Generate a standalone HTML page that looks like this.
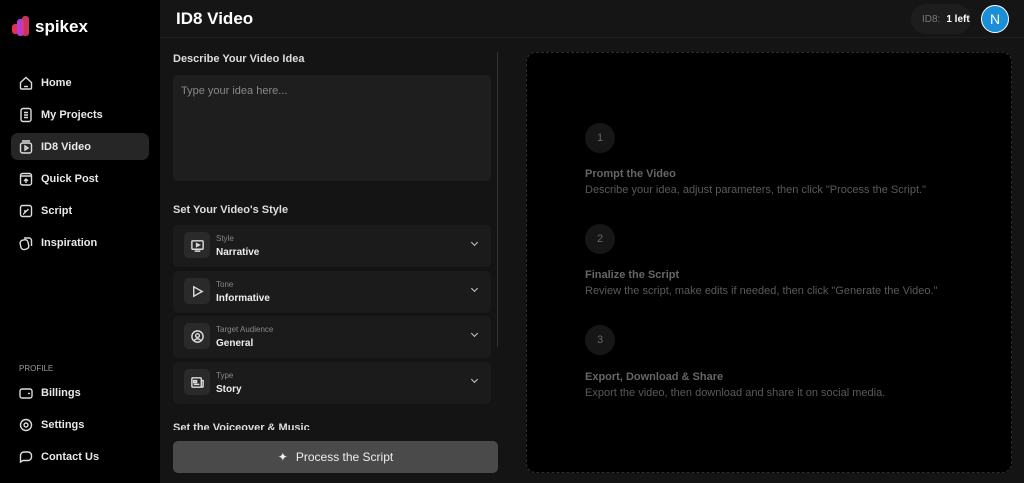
<!DOCTYPE html>
<html><head><meta charset="utf-8"><style>
*{box-sizing:border-box;margin:0;padding:0}
body{width:1024px;height:483px;overflow:hidden;background:#141414;font-family:"Liberation Sans",sans-serif;color:#fff;position:relative}
.sb{position:absolute;left:0;top:0;width:160px;height:483px;background:#000}
.logo{position:absolute;left:12px;top:16px;display:flex;align-items:center;gap:3px;font-weight:bold;font-size:17px}
.nav{position:absolute;left:11px;width:138px;height:27px;border-radius:7px;display:flex;align-items:center;padding-left:7px;font-size:11px;font-weight:bold;color:#e8e8e8}
.nav svg{width:16px;height:16px;margin-right:7px;fill:none;stroke:#ddd;stroke-width:1.4}
.nav.act{background:#262626}
.hdr{position:absolute;left:160px;top:0;right:0;height:38px;background:#151515;border-bottom:1px solid #1e1e1e}
.ttl{position:absolute;left:176px;top:9px;font-size:17px;font-weight:bold}
.lbl{position:absolute;left:173px;font-size:11px;font-weight:bold;color:#ddd}
.ta{position:absolute;left:173px;top:75px;width:318px;height:106px;background:#1e1e1e;border-radius:5px;padding:10px 8px;font-size:11px;color:#888}
.sel{position:absolute;left:173px;width:318px;height:42px;background:#1b1b1b;border-radius:5px}
.ic{position:absolute;left:11px;top:7px;width:26px;height:26px;background:#2a2a2a;border-radius:5px;display:flex;align-items:center;justify-content:center}
.ic svg{width:15px;height:15px;fill:none;stroke:#ddd;stroke-width:1.5}
.sl{position:absolute;left:43px;top:9px;font-size:8px;color:#888}
.sv{position:absolute;left:43px;top:22px;font-size:10px;font-weight:bold;color:#eee}
.chev{position:absolute;right:14px;top:15px;width:5px;height:5px;border-right:1.5px solid #ccc;border-bottom:1.5px solid #ccc;transform:rotate(45deg)}
.btn{position:absolute;left:173px;top:441px;width:325px;height:32px;background:#4a4a4a;border-radius:5px;display:flex;align-items:center;justify-content:center;font-size:12px;color:#eee}
.rp{position:absolute;left:526px;top:52px;width:486px;height:421px;background:#000;border:1.5px dashed #2c2c2c;border-radius:10px}
.num{position:absolute;left:585px;width:30px;height:30px;border-radius:50%;background:#161616;color:#666;font-size:11px;display:flex;align-items:center;justify-content:center}
.st{position:absolute;left:585px;font-size:11px;font-weight:bold;color:#666}
.sd{position:absolute;left:585px;font-size:11px;color:#5a5a5a}
</style></head><body>
<div class="sb">
<div class="logo"><svg width="20" height="22" viewBox="0 0 20 22"><rect x="0" y="8" width="7" height="10" rx="3" fill="#e8304a"/><rect x="5" y="3" width="7" height="17" rx="3" fill="#b53bd6"/><rect x="10" y="0" width="7" height="20" rx="3" fill="#e23a6a" opacity=".9"/></svg>spikex</div>
<div class="nav" style="top:69px"><svg viewBox="0 0 16 16"><path d="M2.5 7.5L8 2.5l5.5 5V13a1 1 0 01-1 1h-9a1 1 0 01-1-1z"/><path d="M6 11.5h4"/></svg>Home</div>
<div class="nav" style="top:101px"><svg viewBox="0 0 16 16"><rect x="3" y="1.5" width="10" height="13" rx="2"/><path d="M6 5.5h4M6 8h4M6 10.5h4"/></svg>My Projects</div>
<div class="nav act" style="top:133px"><svg viewBox="0 0 16 16"><rect x="2.5" y="4" width="11" height="10" rx="2"/><path d="M4 2h8M7 7l3 2-3 2z"/></svg>ID8 Video</div>
<div class="nav" style="top:165px"><svg viewBox="0 0 16 16"><rect x="2.5" y="2.5" width="11" height="11.5" rx="2"/><path d="M2.5 5h11M8 12V8M6 10l2-2 2 2"/></svg>Quick Post</div>
<div class="nav" style="top:197px"><svg viewBox="0 0 16 16"><rect x="2.5" y="2.5" width="11" height="11" rx="2"/><path d="M6 10.5l4.5-4.5M5 11l1 0M6 8h2"/></svg>Script</div>
<div class="nav" style="top:229px"><svg viewBox="0 0 16 16"><rect x="2.5" y="5" width="8" height="9.5" rx="3" transform="rotate(-12 6 10)"/><path d="M6 3h5a2.5 2.5 0 012.5 2.5V11"/></svg>Inspiration</div>
<div style="position:absolute;left:19px;top:364px;font-size:8px;color:#999">PROFILE</div>
<div class="nav" style="top:379px"><svg viewBox="0 0 16 16"><rect x="2" y="4" width="12" height="9" rx="2"/><path d="M10 8.5h2"/></svg>Billings</div>
<div class="nav" style="top:411px"><svg viewBox="0 0 16 16"><circle cx="8" cy="8" r="2"/><circle cx="8" cy="8" r="5.5"/></svg>Settings</div>
<div class="nav" style="top:443px"><svg viewBox="0 0 16 16"><path d="M2.5 13V6.5a3.5 3.5 0 013.5-3.5h4a3.5 3.5 0 013.5 3.5v1.5a3.5 3.5 0 01-3.5 3.5H5z"/></svg>Contact Us</div>
</div>
<div class="hdr"></div>
<div class="ttl">ID8 Video</div>
<div style="position:absolute;left:911px;top:4px;width:60px;height:30px;border-radius:15px;background:#1d1d1d;font-size:10px;color:#777;display:flex;align-items:center;padding-left:11px">ID8: <b style="color:#fff;margin-left:6px">1 left</b></div>
<div style="position:absolute;left:981px;top:5px;width:28px;height:28px;border-radius:50%;background:#1a8fd8;border:1.5px solid #fff;display:flex;align-items:center;justify-content:center;font-size:14px">N</div>
<div style="position:absolute;left:497px;top:52px;width:1px;height:295px;background:#333"></div>
<div class="lbl" style="top:53px">Describe Your Video Idea</div>
<div class="ta">Type your idea here...</div>
<div class="lbl" style="top:204px">Set Your Video's Style</div>
<div class="sel" style="top:225px"><div class="ic"><svg viewBox="0 0 16 16"><rect x="2" y="3" width="12" height="9" rx="1"/><path d="M7 6l3 1.5-3 1.5zM5 14h6"/></svg></div><div class="sl">Style</div><div class="sv">Narrative</div><div class="chev"></div></div>
<div class="sel" style="top:271px"><div class="ic"><svg viewBox="0 0 16 16"><path d="M4 3l9 5-9 5z"/></svg></div><div class="sl">Tone</div><div class="sv">Informative</div><div class="chev"></div></div>
<div class="sel" style="top:316px"><div class="ic"><svg viewBox="0 0 16 16"><circle cx="8" cy="8" r="6"/><circle cx="8" cy="7" r="2"/><path d="M4.5 12.5a4 4 0 017 0"/></svg></div><div class="sl">Target Audience</div><div class="sv">General</div><div class="chev"></div></div>
<div class="sel" style="top:362px"><div class="ic"><svg viewBox="0 0 16 16"><rect x="2" y="3" width="10" height="10" rx="1"/><path d="M12 6h2v6a1 1 0 01-2 0M4 6h3v2H4zM4 10h6"/></svg></div><div class="sl">Type</div><div class="sv">Story</div><div class="chev"></div></div>
<div class="lbl" style="top:422px;height:8px;overflow:hidden">Set the Voiceover &amp; Music</div>
<div class="btn"><span style="margin-right:8px;font-size:12px">✦</span>Process the Script</div>
<div class="rp"></div>
<div class="num" style="top:123px">1</div>
<div class="st" style="top:168px">Prompt the Video</div>
<div class="sd" style="top:184px">Describe your idea, adjust parameters, then click "Process the Script."</div>
<div class="num" style="top:224px">2</div>
<div class="st" style="top:269px">Finalize the Script</div>
<div class="sd" style="top:285px">Review the script, make edits if needed, then click "Generate the Video."</div>
<div class="num" style="top:325px">3</div>
<div class="st" style="top:371px">Export, Download &amp; Share</div>
<div class="sd" style="top:387px">Export the video, then download and share it on social media.</div>
</body></html>
